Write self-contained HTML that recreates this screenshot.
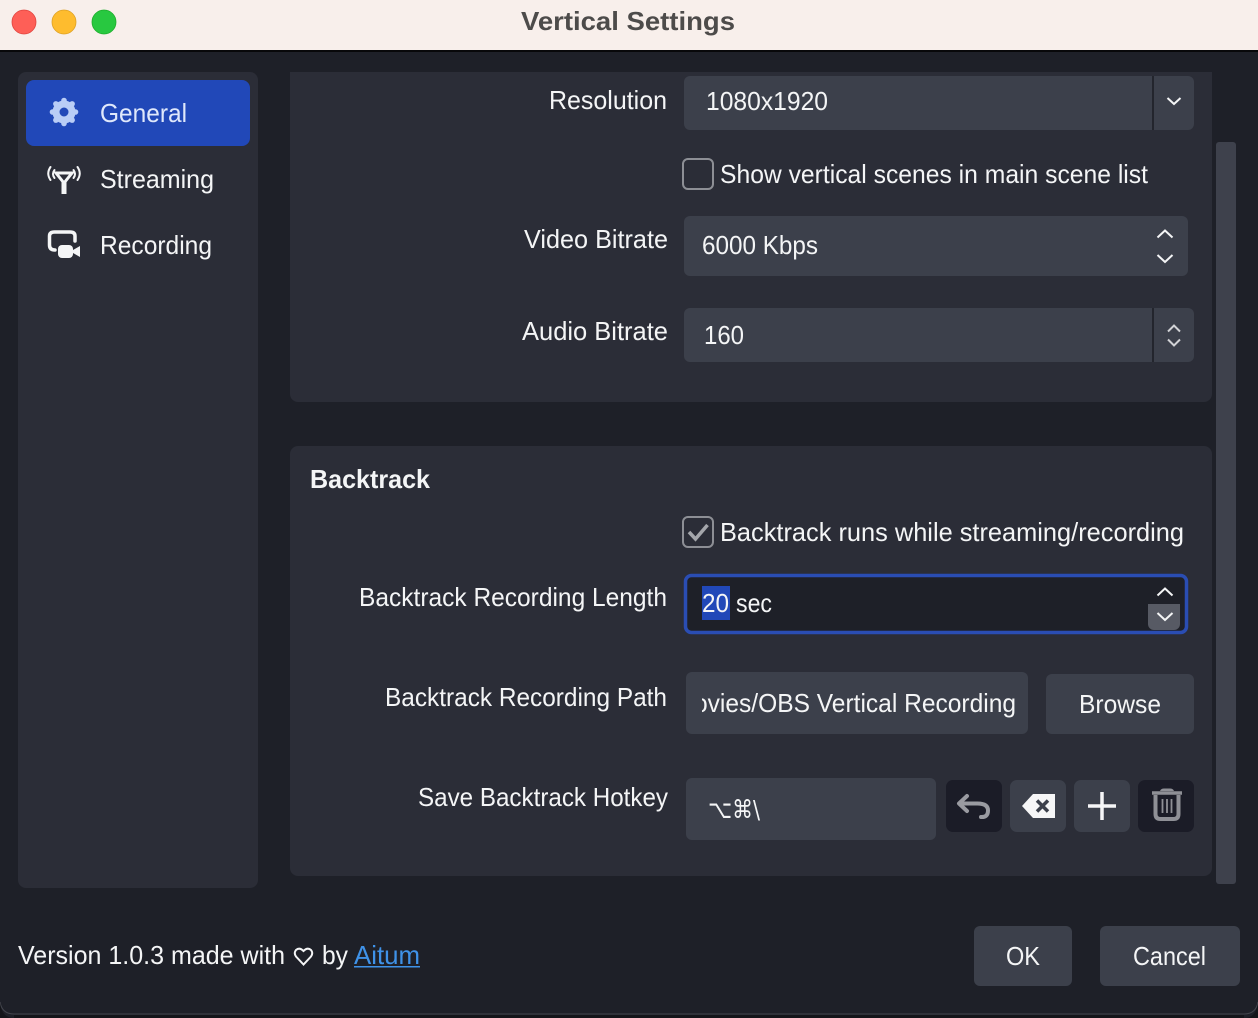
<!DOCTYPE html>
<html><head><meta charset="utf-8"><title>Vertical Settings</title>
<style>
html,body{margin:0;padding:0;background:#1e2028;width:1258px;height:1018px;overflow:hidden}
svg{display:block}
text{font-family:"Liberation Sans",sans-serif;font-size:26px;fill:#f4f5f6}
</style></head><body>
<svg width="1258" height="1018" viewBox="0 0 1258 1018" xmlns="http://www.w3.org/2000/svg">
<defs><clipPath id="pc"><rect x="702" y="672" width="316" height="62"/></clipPath></defs>
<rect width="1258" height="1018" fill="#1e2028"/>
<rect width="1258" height="50" fill="#f8efeb"/>
<rect y="50" width="1258" height="2" fill="#08080a"/>
<circle cx="24" cy="22" r="12" fill="#fe5f57" stroke="#e0443e" stroke-width=".8"/>
<circle cx="64" cy="22" r="12" fill="#febc2e" stroke="#dea123" stroke-width=".8"/>
<circle cx="104" cy="22" r="12" fill="#28c840" stroke="#1dad2b" stroke-width=".8"/>
<text x="521" y="30" textLength="214" lengthAdjust="spacingAndGlyphs" style="font-weight:bold;fill:#4d4b4a">Vertical Settings</text>

<rect x="18" y="72" width="240" height="816" rx="8" fill="#2b2d37"/>
<rect x="26" y="80" width="224" height="66" rx="8" fill="#2148b8"/>
<g fill="#b9cdf6"><circle cx="64" cy="100.500" r="2.800"/><circle cx="64" cy="123.500" r="2.800"/><circle cx="52.500" cy="112" r="2.800"/><circle cx="75.500" cy="112" r="2.800"/><circle cx="55.900" cy="103.900" r="2.800"/><circle cx="72.100" cy="103.900" r="2.800"/><circle cx="55.900" cy="120.100" r="2.800"/><circle cx="72.100" cy="120.100" r="2.800"/></g>
<circle cx="64" cy="112" r="8" fill="none" stroke="#b9cdf6" stroke-width="7"/>
<text x="100" y="122" textLength="87" lengthAdjust="spacingAndGlyphs" style="fill:#dfe8fb">General</text>
<g fill="none" stroke="#f4f5f6"><path stroke-width="2" stroke-linecap="round" d="M54.500 170q-3 4 0 8M50.500 167q-4.500 6.500 0 13M73.500 170q3 4 0 8M77.500 167q4.500 6.500 0 13"/><path stroke-width="3" d="M56 173h16l-8 10z"/><path stroke-width="5" d="M64 181v13"/></g>
<text x="100" y="188" textLength="114" lengthAdjust="spacingAndGlyphs">Streaming</text>
<path fill="none" stroke="#f4f5f6" stroke-width="3.500" stroke-linecap="round" d="M55 250q-5.500 0-5.500-5v-9q0-4 5-4h15.500q5 0 5 4v5"/>
<rect x="58" y="245" width="15" height="13" rx="4" fill="#f4f5f6"/><path fill="#f4f5f6" d="M73 250l7-4v11l-7-4z"/>
<text x="100" y="254" textLength="112" lengthAdjust="spacingAndGlyphs">Recording</text>

<path d="M290 72H1212V394a8 8 0 0 1-8 8H298a8 8 0 0 1-8-8z" fill="#2b2d37"/>
<rect x="290" y="446" width="922" height="430" rx="8" fill="#2b2d37"/>
<rect x="1216" y="142" width="20" height="742" rx="3" fill="#3e414c"/>

<text x="549" y="109" textLength="118" lengthAdjust="spacingAndGlyphs">Resolution</text>
<rect x="684" y="76" width="510" height="54" rx="6" fill="#3c404b"/>
<rect x="1152" y="76" width="2" height="54" fill="#23252d"/>
<text x="706" y="110" textLength="122" lengthAdjust="spacingAndGlyphs">1080x1920</text>
<path d="M1167.500 98l6.500 6 6.500-6" fill="none" stroke="#f4f5f6" stroke-width="2"/>

<rect x="683" y="159" width="30" height="30" rx="5" fill="none" stroke="#8d8f95" stroke-width="2"/>
<text x="720" y="183" textLength="428" lengthAdjust="spacingAndGlyphs">Show vertical scenes in main scene list</text>

<text x="524" y="248" textLength="144" lengthAdjust="spacingAndGlyphs">Video Bitrate</text>
<rect x="684" y="216" width="504" height="60" rx="6" fill="#3c404b"/>
<text x="702" y="254" textLength="116" lengthAdjust="spacingAndGlyphs">6000 Kbps</text>
<path d="M1157.500 237.500l7.500-7 7.500 7M1157.500 255l7.500 7 7.500-7" fill="none" stroke="#f4f5f6" stroke-width="2"/>

<text x="522" y="340" textLength="146" lengthAdjust="spacingAndGlyphs">Audio Bitrate</text>
<rect x="684" y="308" width="510" height="54" rx="6" fill="#3c404b"/>
<rect x="1152" y="308" width="2" height="54" fill="#23252d"/>
<text x="704" y="344" textLength="40" lengthAdjust="spacingAndGlyphs">160</text>
<path d="M1168 331.500l6-6 6 6M1168 339.500l6 6 6-6" fill="none" stroke="#d2d3d6" stroke-width="2"/>

<text x="310" y="488" textLength="120" lengthAdjust="spacingAndGlyphs" style="font-weight:bold">Backtrack</text>
<rect x="683" y="517" width="30" height="30" rx="5" fill="none" stroke="#8d8f95" stroke-width="2"/>
<path d="M689 532l6.500 7 12-14" fill="none" stroke="#a4a6ab" stroke-width="3.500"/>
<text x="720" y="541" textLength="464" lengthAdjust="spacingAndGlyphs">Backtrack runs while streaming/recording</text>

<text x="359" y="606" textLength="308" lengthAdjust="spacingAndGlyphs">Backtrack Recording Length</text>
<rect x="685.500" y="575.500" width="501" height="57" rx="6" fill="#1e2028" stroke="#2a4db3" stroke-width="3.500"/>
<rect x="702" y="586" width="28" height="34" fill="#2148b8"/>
<text x="702" y="612" textLength="27" lengthAdjust="spacingAndGlyphs">20</text>
<text x="736" y="612" textLength="36" lengthAdjust="spacingAndGlyphs">sec</text>
<path d="M1148 604h32v20a6 6 0 0 1-6 6h-20a6 6 0 0 1-6-6z" fill="#575a64"/>
<path d="M1157.500 595.500l7.500-7 7.500 7M1157.500 613l7.500 7 7.500-7" fill="none" stroke="#f4f5f6" stroke-width="2"/>

<text x="385" y="706" textLength="282" lengthAdjust="spacingAndGlyphs">Backtrack Recording Path</text>
<rect x="686" y="672" width="342" height="62" rx="6" fill="#3c404b"/>
<text x="694" y="712" textLength="322" lengthAdjust="spacingAndGlyphs" clip-path="url(#pc)">ovies/OBS Vertical Recording</text>
<rect x="1046" y="674" width="148" height="60" rx="6" fill="#3c404b"/>
<text x="1079" y="713" textLength="82" lengthAdjust="spacingAndGlyphs">Browse</text>

<text x="418" y="806" textLength="250" lengthAdjust="spacingAndGlyphs">Save Backtrack Hotkey</text>
<rect x="686" y="778" width="250" height="62" rx="6" fill="#3c404b"/>
<text x="708" y="818" textLength="52" lengthAdjust="spacingAndGlyphs" style="font-family:'DejaVu Sans',sans-serif;font-size:25px">⌥⌘\</text>
<rect x="946" y="780" width="56" height="52" rx="7" fill="#1b1c27"/>
<path d="M967 796l-8 7.500 8 7.500M959.500 803.500h18q10.500 0 10.500 7t-7 6.500" fill="none" stroke="#9a9ba1" stroke-width="4" stroke-linecap="round" stroke-linejoin="round"/>
<rect x="1010" y="780" width="56" height="52" rx="7" fill="#3c404b"/>
<path d="M1022 806l11-12h22v24h-22z" fill="#f6f6f7"/>
<path d="M1037 800.500l11 11M1048 800.500l-11 11" stroke="#3c404b" stroke-width="3.500"/>
<rect x="1074" y="780" width="56" height="52" rx="7" fill="#3c404b"/>
<path d="M1102 792v28M1088 806h28" stroke="#f6f6f7" stroke-width="3.500"/>
<rect x="1138" y="780" width="56" height="52" rx="7" fill="#1b1c27"/>
<path d="M1152 793h30" fill="none" stroke="#8f9096" stroke-width="3.500"/>
<path d="M1160 791q1-2.500 4-2.500h6q3 0 4 2.500z" fill="#8f9096"/>
<path d="M1155.500 795v19q0 5 5 5h13q5 0 5-5v-19" fill="none" stroke="#8f9096" stroke-width="4"/>
<path d="M1162.500 799v14M1167 799v14M1171.500 799v14" stroke="#8f9096" stroke-width="1.800"/>

<text x="18" y="964" textLength="267" lengthAdjust="spacingAndGlyphs">Version 1.0.3 made with</text>
<path d="M303.500 964.500l-7.500-8q-2.500-3.500 0-6.500 3.500-3 7.500 1 4-4 7.500-1 2.500 3 0 6.500z" fill="none" stroke="#f4f5f6" stroke-width="2"/>
<text x="322" y="964" textLength="26" lengthAdjust="spacingAndGlyphs">by</text>
<text x="354" y="964" textLength="66" lengthAdjust="spacingAndGlyphs" style="fill:#3f92e8">Aitum</text>
<rect x="354" y="966" width="66" height="1.500" fill="#3f92e8"/>

<rect x="974" y="926" width="98" height="60" rx="6" fill="#3c404b"/>
<text x="1006" y="965" textLength="34" lengthAdjust="spacingAndGlyphs">OK</text>
<rect x="1100" y="926" width="140" height="60" rx="6" fill="#3c404b"/>
<text x="1133" y="965" textLength="73" lengthAdjust="spacingAndGlyphs">Cancel</text>

<path d="M0 1002q2 12 14 12H1244q12 0 14-12" fill="none" stroke="#42444c" stroke-width="1"/>
<path d="M0 1003q2 15 14 15H0zM1258 1003q-2 15-14 15h14z" fill="#14151a"/>
<rect x="14" y="1015" width="1230" height="3" fill="#14151a"/>
</svg>
</body></html>
